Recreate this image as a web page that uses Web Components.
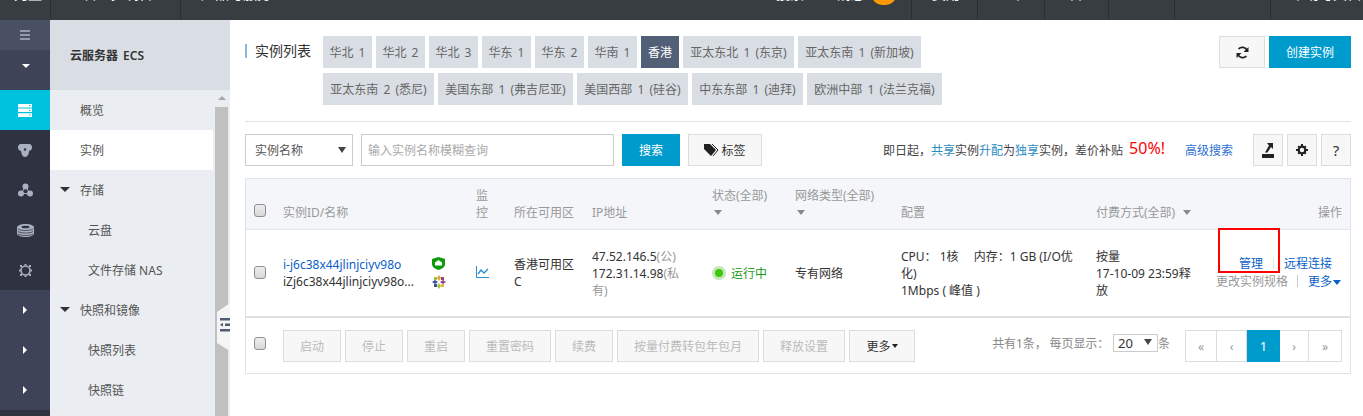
<!DOCTYPE html>
<html lang="zh"><head><meta charset="utf-8"><title>云服务器 ECS</title>
<style>
html,body{margin:0;padding:0;height:416px;overflow:hidden;background:#fff;font:12px/17px "Noto Sans","Noto Sans CJK SC",sans-serif;color:#333}
ali-console{display:grid;grid-template-columns:50px 180px 1fr;grid-template-rows:20px 396px;width:1363px;height:416px;overflow:hidden}
ali-topbar{grid-column:1/4}
</style></head><body>
<ali-console>
  <ali-topbar></ali-topbar>
  <ali-rail></ali-rail>
  <ali-side></ali-side>
  <ali-main>
    <ali-head></ali-head>
    <ali-toolbar></ali-toolbar>
    <ali-table></ali-table>
  </ali-main>
</ali-console>
<script>
function def(name,html){customElements.define(name,class extends HTMLElement{constructor(){super();this.attachShadow({mode:'open'}).innerHTML=html}})}

def('ali-btn',`<style>
:host{display:inline-flex;box-sizing:border-box;height:32px;align-items:center;justify-content:center;padding:0 16px;border:1px solid #ddd;background:#f7f7f7;color:#333;white-space:nowrap;gap:1px}
:host([primary]){background:#009bcd;border-color:#009bcd;color:#fff}
:host([off]){color:#bbb}
:host([square]){padding:0}
</style><slot></slot>`);

def('ali-check',`<style>:host{display:inline-block;box-sizing:border-box;width:12px;height:13px;border:1px solid #8f8f8f;border-radius:3px;background:linear-gradient(#eee,#d8d8d8)}</style>`);

def('ali-topbar',`<style>
:host{display:flex;height:20px;background:#373d41;color:#fff;overflow:hidden;font:14px/20px "Noto Sans","Noto Sans CJK SC",sans-serif}
.c{box-sizing:border-box;height:20px;border-right:1px solid #2a2f32;flex:none;white-space:nowrap}
.c span{display:block;margin-top:-16px}
.b{width:24px;height:15px;margin:-10px 0 0 7px;background:#ff9800;border-radius:0 0 10px 10px;flex:none}
.f{flex:1;border:0;padding:0 18px 0 0;display:flex;justify-content:space-between}
</style>
<div class="c" style="width:51px;padding-left:14px"><span style="font-weight:700">阿里</span></div>
<div class="c" style="width:130px;padding-left:32px"><span>管理控制台</span></div>
<div class="c f"><span style="margin-left:20px">产品与服务</span><span>搜索</span></div>
<div class="c" style="width:90px;padding-left:15px;display:flex"><span>消息</span><i class="b"></i></div>
<div class="c" style="width:66px;padding-left:20px"><span>费用</span></div>
<div class="c" style="width:67px;padding-left:19px"><span>工单</span></div>
<div class="c" style="width:64px;padding-left:24px"><span>备</span></div>
<div class="c" style="width:66px;padding-left:19px"><span>企业</span></div>
<div class="c" style="width:96px"></div>
<div class="c" style="width:92px;padding-left:20px;border:0"><span>帮助与文档</span></div>`);

def('ali-rail',`<style>
:host{display:flex;flex-direction:column;background:#2f3240;height:396px;overflow:hidden}
.i{height:40px;flex:none;display:flex;align-items:center;justify-content:center}
.top{height:30px;background:#4a5064}
.l{background:#3e4358}
.on{background:#00c1de}
svg{display:block}
</style>
<div class="i top"><svg width="12" height="12" viewBox="0 0 12 12"><path d="M1 2h10M1 6h10M1 10h10" stroke="#aab3c4" stroke-width="1.3"/></svg></div>
<div class="i l"><svg width="10" height="6" viewBox="0 0 10 6" style="margin-top:-8px;margin-left:2px"><path d="M1 1h8L5 5z" fill="#fff"/></svg></div>
<div class="i on"><svg width="14" height="13" viewBox="0 0 14 13"><path d="M0 0h14v3.400H0zM0 4.600h14V8H0zM0 9.200h14V13H0z" fill="#fff"/><path d="M11 1h1.500v1H11zM11 5.800h1.500v1H11zM11 10.600h1.500v1H11z" fill="#00c1de"/></svg></div>
<div class="i"><svg width="14" height="13" viewBox="0 0 14 13"><path d="M3 0h8c2 0 3 1.500 3 3.500 0 2-1 3-3 3.500 0 3-1.500 6-4 6S3.500 10 3 7C1 6.500 0 5.500 0 3.500 0 1.500 1 0 3 0z" fill="#a9b0bf"/><circle cx="7" cy="5.500" r="1.200" fill="#2f3240"/></svg></div>
<div class="i"><svg width="15" height="14" viewBox="0 0 15 14"><circle cx="7.500" cy="3.500" r="3" fill="#a9b0bf"/><circle cx="3" cy="10.500" r="3" fill="#a9b0bf"/><circle cx="12" cy="10.500" r="3" fill="#a9b0bf"/><path d="M7.500 3.500 3 10.500h9z" fill="none" stroke="#a9b0bf"/></svg></div>
<div class="i"><svg width="17" height="13" viewBox="0 0 17 13"><path d="M8.500 0C13 0 17 1.500 17 3.500v6C17 11.500 13 13 8.500 13S0 11.500 0 9.500v-6C0 1.500 4 0 8.500 0z" fill="#a9b0bf"/><path d="M1 5c3 2 12 2 15 0M1 7.500c3 2 12 2 15 0M1 10c3 2 12 2 15 0" stroke="#2f3240" fill="none" stroke-width=".8"/><ellipse cx="8.500" cy="3" rx="4" ry="1.300" fill="#2f3240"/></svg></div>
<div class="i"><svg width="13" height="13" viewBox="0 0 13 13"><circle cx="6.500" cy="6.500" r="4.500" fill="none" stroke="#a9b0bf" stroke-width="1.600"/><path d="M1 1h2v2H1zM10 1h2v2h-2zM1 10h2v2H1zM10 10h2v2h-2zM5.500 0h2v1.500h-2zM5.500 11.500h2V13h-2zM0 5.500h1.500v2H0zM11.500 5.500H13v2h-1.500z" fill="#a9b0bf"/></svg></div>
<div class="i l"><svg width="6" height="10" viewBox="0 0 6 10"><path d="M1 1v8l4-4z" fill="#fff"/></svg></div>
<div class="i l"><svg width="6" height="10" viewBox="0 0 6 10"><path d="M1 1v8l4-4z" fill="#fff"/></svg></div>
<div class="i l"><svg width="6" height="10" viewBox="0 0 6 10"><path d="M1 1v8l4-4z" fill="#fff"/></svg></div>`);

def('ali-side',`<style>
:host{display:flex;flex-direction:column;height:396px;position:relative;overflow:hidden;background:#eaedf1;color:#555}
.hd{height:70px;flex:none;background:#d9dee4;box-sizing:border-box;padding:27px 0 0 20px;font-weight:600;color:#333;line-height:17px;word-spacing:2px}
.bd{display:grid;grid-template-columns:163px 17px;flex:1;min-height:0}
.it{height:40px;display:flex;align-items:center;padding-left:30px;position:relative}
.sub{padding-left:38px}
.on{background:#fff}
.ca{position:absolute;left:10px;top:17px;width:0;height:0;border:5px solid transparent;border-top:5px solid #333;border-bottom:0}
.bar{display:flex;flex-direction:column;align-items:stretch;padding:0 2px}
.up{height:17px;flex:none;position:relative}
.up:after{content:"";position:absolute;left:3px;top:6px;border:4px solid transparent;border-bottom:4px solid #a5a5a5;border-top:0}
.th{flex:1;background:#c0c0c0}
.hdl{position:absolute;right:0;top:283px}
</style>
<div class="hd">云服务器 ECS</div>
<div class="bd"><div>
<div class="it">概览</div>
<div class="it on">实例</div>
<div class="it"><i class="ca"></i>存储</div>
<div class="it sub">云盘</div>
<div class="it sub">文件存储 NAS</div>
<div class="it"><i class="ca"></i>快照和镜像</div>
<div class="it sub">快照列表</div>
<div class="it sub">快照链</div>
</div><div class="bar"><div class="up"></div><div class="th"></div></div></div>
<svg class="hdl" width="13" height="48" viewBox="0 0 13 48"><path d="M13 0v48L0 40V9z" fill="#f5f5f5"/><path d="M3 15h10v2.500H3zM8 20.500h5V23H8zM3 21.700l3-2v4zM3 26h10v2.500H3z" fill="#4f5c73"/></svg>`);

def('ali-main',`<style>:host{display:block;box-sizing:border-box;height:396px;padding:16px 12px 0 15px;overflow:hidden}</style><slot></slot>`);

def('ali-tab',`<style>:host{display:inline-flex;box-sizing:border-box;width:49px;height:32px;align-items:center;justify-content:center;background:#d9dee4;color:#666;white-space:nowrap;word-spacing:2px}
:host([on]){background:#526077;color:#fff}</style><slot></slot>`);

def('ali-head',`<style>
:host{display:flex;height:69px;align-items:flex-start;padding-bottom:16px;border-bottom:1px solid #e1e1e1;margin-bottom:12px}
.t{flex:none;width:78px;box-sizing:border-box;height:14px;margin-top:8px;border-left:2px solid #88b7e0;padding-left:8px;line-height:14px;font-size:14px;white-space:nowrap;color:#333}
.tabs{flex:none;width:640px;display:flex;flex-wrap:wrap;gap:5px 4px}
.a{margin-left:auto;display:flex;gap:4px}
</style>
<div class="t">实例列表</div>
<div class="tabs">
<ali-tab>华北 1</ali-tab><ali-tab>华北 2</ali-tab><ali-tab>华北 3</ali-tab><ali-tab>华东 1</ali-tab><ali-tab>华东 2</ali-tab><ali-tab>华南 1</ali-tab><ali-tab on style="width:38px">香港</ali-tab><ali-tab style="width:111px">亚太东北 1 (东京)</ali-tab><ali-tab style="width:123px">亚太东南 1 (新加坡)</ali-tab>
<ali-tab style="width:111px">亚太东南 2 (悉尼)</ali-tab><ali-tab style="width:135px">美国东部 1 (弗吉尼亚)</ali-tab><ali-tab style="width:111px">美国西部 1 (硅谷)</ali-tab><ali-tab style="width:111px">中东东部 1 (迪拜)</ali-tab><ali-tab style="width:135px">欧洲中部 1 (法兰克福)</ali-tab>
</div>
<div class="a">
<ali-btn square style="width:46px"><svg width="13" height="13" viewBox="0 0 13 13"><path d="M11 4.500A5 5 0 0 0 2.600 3M2 8.500A5 5 0 0 0 10.400 10" fill="none" stroke="#222" stroke-width="1.800"/><path d="M12.500 1v5h-5zM.5 12V7h5z" fill="#222"/></svg></ali-btn>
<ali-btn primary style="width:82px;padding:0">创建实例</ali-btn>
</div>`);

def('ali-toolbar',`<style>
:host{display:flex;height:32px;align-items:center;margin-bottom:12px}
.box{box-sizing:border-box;height:32px;border:1px solid #ccc;display:flex;align-items:center;padding-left:9px;flex:none;background:#fff}
.sel{width:108px;position:relative;color:#555}
.sel:after{content:"";position:absolute;right:6px;top:12px;border:4px solid transparent;border-top:6px solid #444;border-bottom:0}
.inp{width:253px;margin-left:8px;color:#aaa;padding-left:6px}
.promo{margin-left:auto;white-space:nowrap;color:#444;display:flex;align-items:center}
.promo b{font-weight:400;color:#2b8cc4}
.promo em{font-style:normal;font-size:16px;color:#f00;margin-left:6px;position:relative;top:-2px}
.adv{margin:0 20px;color:#2f6fd0;white-space:nowrap}
.ic{display:flex;gap:4px}
</style>
<div class="box sel">实例名称</div>
<div class="box inp">输入实例名称模糊查询</div>
<ali-btn primary style="width:58px;padding:0;margin-left:8px">搜索</ali-btn>
<ali-btn style="width:74px;padding:0;margin-left:8px"><svg width="16" height="12" viewBox="0 0 16 12"><path d="M0 0h6l6 6-5 6-7-7z" fill="#222"/><path d="M8 0l6 6-5 6" fill="none" stroke="#222"/></svg>标签</ali-btn>
<div class="promo"><span>即日起，<b>共享</b>实例<b>升配</b>为<b>独享</b>实例，差价补贴</span><em>50%!</em></div>
<div class="adv">高级搜索</div>
<div class="ic">
<ali-btn square style="width:30px"><svg width="12" height="15" viewBox="0 0 12 15"><path d="M0 11h12v4H0z" fill="#222"/><path d="M5 0h6v6L9 4 5.500 9.500H3L7 2.500z" fill="#222"/></svg></ali-btn>
<ali-btn square style="width:30px"><svg width="12" height="12" viewBox="0 0 12 12"><circle cx="6" cy="6" r="3.300" fill="none" stroke="#222" stroke-width="2.200"/><path d="M5 0h2v2.500H5zM5 9.500h2V12H5zM0 5h2.500v2H0zM9.500 5H12v2H9.500zM1.500 2.900 2.900 1.500l1.600 1.600-1.400 1.400zM10.500 9.100l-1.400 1.400-1.600-1.600 1.400-1.400zM9.100 1.500l1.400 1.400-1.600 1.600-1.400-1.400zM2.900 10.500 1.500 9.100l1.600-1.600 1.400 1.400z" fill="#222"/></svg></ali-btn>
<ali-btn square style="width:30px;font-size:15px">?</ali-btn>
</div>`);

def('ali-table',`<style>
:host{display:block;border:1px solid #dfe4e9;height:196px;box-sizing:border-box}
.g{display:grid;grid-template-columns:37px 193px 38px 78px 120px 83px 106px 195px 119px 135px}
.h{background:#f4f6f9;border-bottom:1px solid #e1e6eb;color:#999;box-sizing:border-box;height:51px;align-items:end;padding-bottom:8px}
.ck{display:flex;padding-left:8px}
.h .ck{padding-bottom:4px}
.ar{display:inline-block;border:4px solid transparent;border-top:5px solid #888;border-bottom:0;margin-left:8px;vertical-align:2px}
.r{align-items:center;border-bottom:2px solid #e1e1e1;box-sizing:border-box;height:88px}
.r .ck{margin-top:-2px}
.nw{white-space:nowrap}
.id{display:flex;align-items:center}
.id>div:first-child{width:149px;flex:none;white-space:nowrap}
.lk{color:#0a5fc8}
.icons{display:flex;flex-direction:column;gap:5px}
.g2{color:#999}
.st{display:flex;align-items:center;color:#1a9a1a;gap:5px}
.dot{width:14px;height:14px;box-sizing:border-box;border-radius:50%;background:#3dc80e;border:3px solid #c5e8b8}
.act{text-align:right;padding-right:9px;line-height:18px;white-space:nowrap}
.sp{display:inline-block;width:1px;height:12px;background:#ccc;vertical-align:-1px;margin:0 10px}
.mo{display:inline-block;border:4px solid transparent;border-top:5px solid #0a5fc8;border-bottom:0;margin-left:1px;vertical-align:1px}
.mk{position:absolute;left:972px;top:49px;width:62px;height:45px;box-sizing:border-box;border:2px solid #f00}
.wrap{position:relative}
.f{display:flex;align-items:center;height:56px;padding-right:8px}
.f .ck{width:37px;box-sizing:border-box;flex:none;margin-top:-5px}
.btns{display:flex;gap:4px}
.dk{display:inline-block;border:3.500px solid transparent;border-top:4px solid #222;border-bottom:0}
.tot{margin-left:auto;color:#888;white-space:nowrap;display:flex;align-items:center;margin-top:-6px;letter-spacing:-.1px}
.s20{box-sizing:border-box;width:45px;height:18px;border:1px solid #ccc;margin:0 0 0 4px;padding-left:4px;position:relative;color:#333;line-height:16px;font-size:13px}
.s20:after{content:"";position:absolute;right:5px;top:4px;border:4px solid transparent;border-top:6px solid #444;border-bottom:0}
.pg{display:flex;margin-left:15px;height:32px;box-sizing:border-box;border:1px solid #ddd}
.pg i{font-style:normal;display:flex;align-items:center;justify-content:center;color:#999;border-right:1px solid #ddd;box-sizing:border-box}
.pg i:last-child{border:0}
.pg .on{background:#009bcd;color:#fff;font-weight:400;font-size:13px;margin:-1px 0;border:0}
</style>
<div class="wrap">
<div class="g h">
<div class="ck"><ali-check></ali-check></div><div>实例ID/名称</div><div>监<br>控</div><div>所在可用区</div><div>IP地址</div>
<div>状态(全部)<br><i class="ar" style="margin:0 0 0 2px"></i></div><div class="nw">网络类型(全部)<br><i class="ar" style="margin:0 0 0 2px"></i></div><div>配置</div><div class="nw">付费方式(全部)<i class="ar"></i></div><div style="text-align:right;padding-right:8px">操作</div>
</div>
<div class="g r">
<div class="ck"><ali-check></ali-check></div>
<div class="id"><div><span class="lk">i-j6c38x44jlinjciyv98o</span><br>iZj6c38x44jlinjciyv98o...</div>
<div class="icons"><svg width="13" height="13" viewBox="0 0 13 13"><path d="M6.500 0 13 2v5c0 3-3 5-6.500 6C3 12 0 10 0 7V2z" fill="#0a9a0a"/><path d="M6.500 3 10 5.500v3H3v-3z" fill="#fff"/></svg>
<svg width="14" height="14" viewBox="0 0 14 14"><path d="M7 0l2 3-2 3-2-3z" fill="#e8a23a"/><path d="M14 7l-3 2-3-2 3-2z" fill="#9c3f8f"/><path d="M7 14l-2-3 2-3 2 3z" fill="#9bc53d"/><path d="M0 7l3-2 3 2-3 2z" fill="#3f4f9c"/><path d="M2 2h3v3H2z" fill="#9bc53d"/><path d="M9 2h3v3H9z" fill="#9c3f8f"/><path d="M9 9h3v3H9z" fill="#e8b53a"/><path d="M2 9h3v3H2z" fill="#3f4f9c"/></svg></div></div>
<div><svg width="13" height="12" viewBox="0 0 13 12"><path d="M.5 0v11.500H13" fill="none" stroke="#2a8cd0"/><path d="M2 8l3-4 3 3 4-4" fill="none" stroke="#2a8cd0" stroke-width="1.300"/></svg></div>
<div>香港可用区<br>C</div>
<div class="nw">47.52.146.5<span class="g2">(公)</span><br>172.31.14.98<span class="g2">(私</span><br><span class="g2">有)</span></div>
<div class="st"><i class="dot"></i>运行中</div>
<div>专有网络</div>
<div class="nw">CPU： 1核　 内存：1 GB (I/O优<br>化)<br>1Mbps ( 峰值 )</div>
<div class="nw">按量<br>17-10-09 23:59释<br>放</div>
<div class="act"><span style="margin-right:9px"><span class="lk">管理</span><i class="sp" style="background:#e4e4e4"></i><span class="lk">远程连接</span></span><br><span class="g2">更改实例规格</span><i class="sp" style="margin:0 10px 0 9px"></i><span class="lk">更多</span><i class="mo"></i></div>
</div>
<div class="mk"></div>
<div class="f">
<div class="ck"><ali-check></ali-check></div>
<div class="btns"><ali-btn off>启动</ali-btn><ali-btn off>停止</ali-btn><ali-btn off>重启</ali-btn><ali-btn off>重置密码</ali-btn><ali-btn off>续费</ali-btn><ali-btn off>按量付费转包年包月</ali-btn><ali-btn off>释放设置</ali-btn><ali-btn style="width:66px;padding:0">更多<i class="dk"></i></ali-btn></div>
<div class="tot">共有1条， 每页显示：<div class="s20">20</div>条</div>
<div class="pg"><i style="width:31px">«</i><i style="width:30px">‹</i><i class="on" style="width:33px">1</i><i style="width:29px">›</i><i style="width:32px">»</i></div>
</div>
</div>`);
</script>
</body></html>
